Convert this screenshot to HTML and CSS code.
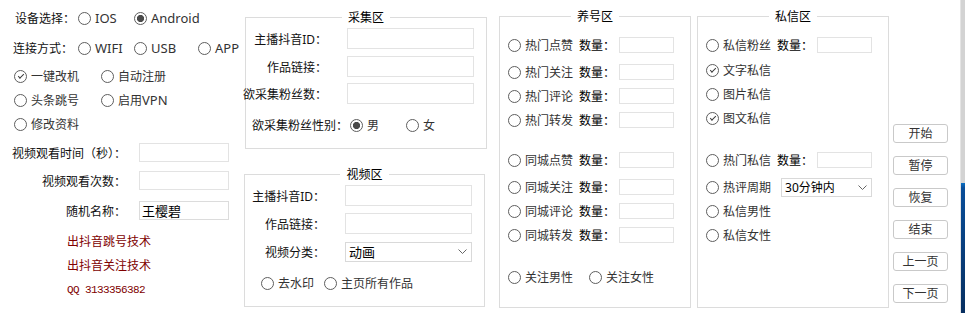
FILE: index.html
```html
<!DOCTYPE html>
<html lang="zh-CN">
<head>
  <meta charset="UTF-8" />
  <title>抖音助手</title>
  <link rel="stylesheet" href="styles.css">
</head>
<body>

  <div class="win">

    <!-- left: device + settings -->
    <div class="left">
      <div class="line line-top line-1">
        <span class="cap cap-device">设备选择：</span>
        <label class="opt w56"><span class="rb"></span><span class="en">IOS</span></label>
        <label class="opt"><span class="rb on"></span><span class="en">Android</span></label>
      </div>
      <div class="line line-top line-2">
        <span class="cap">连接方式：</span>
        <label class="opt w56"><span class="rb"></span><span class="en">WIFI</span></label>
        <label class="opt w64"><span class="rb"></span><span class="en">USB</span></label>
        <label class="opt"><span class="rb"></span><span class="en">APP</span></label>
      </div>
      <div class="line line-pick line-3">
        <label class="opt w87"><span class="rb chk"></span>一键改机</label>
        <label class="opt"><span class="rb"></span>自动注册</label>
      </div>
      <div class="line line-pick">
        <label class="opt w87"><span class="rb"></span>头条跳号</label>
        <label class="opt"><span class="rb"></span>启用<span class="en">VPN</span></label>
      </div>
      <div class="line line-pick">
        <label class="opt w87"><span class="rb"></span>修改资料</label>
      </div>

      <div class="field field-1">
        <span class="label">视频观看时间（秒）：</span>
        <input class="txt" type="text" />
      </div>
      <div class="field field-2">
        <span class="label">视频观看次数：</span>
        <input class="txt" type="text" />
      </div>
      <div class="field field-3">
        <span class="label">随机名称：</span>
        <input class="txt txt-name" type="text" value="王樱碧" />
      </div>

      <div class="promo promo-first">出抖音跳号技术</div>
      <div class="promo">出抖音关注技术</div>
      <div class="promo qq">QQ 3133356382</div>
    </div>

    <!-- middle: grab + video -->
    <div class="mid">
      <div class="group grab">
        <div class="group-title">采集区</div>
        <div class="field f1">
          <span class="label">主播抖音ID：</span>
          <input class="txt txt-lg" type="text" />
        </div>
        <div class="field f2">
          <span class="label">作品链接：</span>
          <input class="txt txt-lg" type="text" />
        </div>
        <div class="field f3">
          <span class="label">欲采集粉丝数：</span>
          <input class="txt txt-lg" type="text" />
        </div>
        <div class="gender">
          <span class="gender-cap">欲采集粉丝性别：</span>
          <label class="opt w56"><span class="rb on"></span>男</label>
          <label class="opt"><span class="rb"></span>女</label>
        </div>
      </div>

      <div class="group video">
        <div class="group-title">视频区</div>
        <div class="field f1">
          <span class="label">主播抖音ID：</span>
          <input class="txt txt-lg" type="text" />
        </div>
        <div class="field f2">
          <span class="label">作品链接：</span>
          <input class="txt txt-lg" type="text" />
        </div>
        <div class="field f2 field-pick">
          <span class="label">视频分类：</span>
          <div class="pick pick-lg">
            <span>动画</span>
            <svg class="chev" width="9" height="5" viewBox="0 0 9 5"><path d="M0.5 0.5L4.5 4.5L8.5 0.5" fill="none" stroke="#666" stroke-width="1"/></svg>
          </div>
        </div>
        <div class="video-opts">
          <label class="opt w63"><span class="rb"></span>去水印</label>
          <label class="opt"><span class="rb"></span>主页所有作品</label>
        </div>
      </div>
    </div>

    <!-- raise account -->
    <div class="group side raise">
      <div class="group-title">养号区</div>
      <div class="row r-first">
        <label class="opt"><span class="rb"></span>热门点赞</label>
        <span class="qty">数量：</span><input class="txt txt-sm" type="text" />
      </div>
      <div class="row r-second">
        <label class="opt"><span class="rb"></span>热门关注</label>
        <span class="qty">数量：</span><input class="txt txt-sm" type="text" />
      </div>
      <div class="row">
        <label class="opt"><span class="rb"></span>热门评论</label>
        <span class="qty">数量：</span><input class="txt txt-sm" type="text" />
      </div>
      <div class="row">
        <label class="opt"><span class="rb"></span>热门转发</label>
        <span class="qty">数量：</span><input class="txt txt-sm" type="text" />
      </div>
      <div class="row r-block">
        <label class="opt"><span class="rb"></span>同城点赞</label>
        <span class="qty">数量：</span><input class="txt txt-sm" type="text" />
      </div>
      <div class="row r-second">
        <label class="opt"><span class="rb"></span>同城关注</label>
        <span class="qty">数量：</span><input class="txt txt-sm" type="text" />
      </div>
      <div class="row">
        <label class="opt"><span class="rb"></span>同城评论</label>
        <span class="qty">数量：</span><input class="txt txt-sm" type="text" />
      </div>
      <div class="row">
        <label class="opt"><span class="rb"></span>同城转发</label>
        <span class="qty">数量：</span><input class="txt txt-sm" type="text" />
      </div>
      <div class="row r-follow">
        <label class="opt w81"><span class="rb"></span>关注男性</label>
        <label class="opt"><span class="rb"></span>关注女性</label>
      </div>
    </div>

    <!-- private messages -->
    <div class="group side msg">
      <div class="group-title">私信区</div>
      <div class="row r-first">
        <label class="opt"><span class="rb"></span>私信粉丝</label>
        <span class="qty">数量：</span><input class="txt txt-sm" type="text" />
      </div>
      <div class="row r-tight">
        <label class="opt"><span class="rb chk"></span>文字私信</label>
      </div>
      <div class="row">
        <label class="opt"><span class="rb"></span>图片私信</label>
      </div>
      <div class="row">
        <label class="opt"><span class="rb chk"></span>图文私信</label>
      </div>
      <div class="row r-block-msg">
        <label class="opt"><span class="rb"></span>热门私信</label>
        <span class="qty">数量：</span><input class="txt txt-sm" type="text" />
      </div>
      <div class="row r-second">
        <label class="opt"><span class="rb"></span>热评周期</label>
        <div class="pick pick-sm">
          <span>30分钟内</span>
          <svg class="chev" width="9" height="5" viewBox="0 0 9 5"><path d="M0.5 0.5L4.5 4.5L8.5 0.5" fill="none" stroke="#666" stroke-width="1"/></svg>
        </div>
      </div>
      <div class="row">
        <label class="opt"><span class="rb"></span>私信男性</label>
      </div>
      <div class="row">
        <label class="opt"><span class="rb"></span>私信女性</label>
      </div>
    </div>

    <!-- actions -->
    <div class="btns">
      <button class="btn" type="button">开始</button>
      <button class="btn" type="button">暂停</button>
      <button class="btn" type="button">恢复</button>
      <button class="btn" type="button">结束</button>
      <button class="btn" type="button">上一页</button>
      <button class="btn" type="button">下一页</button>
    </div>

    <div class="edge"></div>
  </div>

</body>
</html>
```

FILE: styles.css
```css
body {
  margin: 0;
  background: #fff;
  font-family: "Noto Sans", "Noto Sans CJK SC", sans-serif;
  font-size: 12px;
  color: #111;
}
.win {
  display: flex;
  width: 965px;
  height: 313px;
  overflow: hidden;
}

/* radio / check glyphs */
.rb {
  width: 13px;
  height: 13px;
  box-sizing: border-box;
  border: 1px solid #5e5e5e;
  border-radius: 50%;
  margin-right: 4px;
  background: #fff;
  flex: none;
  display: inline-flex;
  align-items: center;
  justify-content: center;
}
.rb.on {
  background: radial-gradient(circle, #4a4a4a 0 3.3px, #fff 3.9px);
}
.rb.chk::after {
  content: "";
  width: 5px;
  height: 2px;
  border-left: 1.6px solid #3a3a3a;
  border-bottom: 1.6px solid #3a3a3a;
  transform: translate(0, -1px) rotate(-45deg);
}
.opt {
  display: flex;
  align-items: center;
  flex: none;
  white-space: nowrap;
  color: #333;
}
.en {
  font-size: 13px;
}
.w56 { width: 56px; }
.w63 { width: 63px; }
.w64 { width: 64px; }
.w81 { width: 81px; }
.w87 { width: 87px; }

/* inputs */
.txt {
  box-sizing: border-box;
  height: 19px;
  width: 90px;
  margin: 0;
  padding: 0 2px;
  border: 1px solid #e3e3e3;
  background: #fff;
  font: inherit;
  color: #000;
  outline: none;
}
.txt-name {
  border-color: #dcdcdc;
  font-size: 13px;
}
.txt-lg {
  width: 127px;
  height: 21px;
}
.txt-sm {
  width: 55px;
  height: 16px;
  margin-left: 4px;
}
.pick {
  display: flex;
  align-items: center;
  justify-content: space-between;
  box-sizing: border-box;
  border: 1px solid #d9d9d9;
  background: #fff;
  padding: 0 4px 0 3px;
  color: #000;
  flex: none;
}
.pick-lg {
  width: 127px;
  height: 20px;
  font-size: 13px;
}
.pick-sm {
  width: 91px;
  height: 19px;
  margin-left: 10px;
}
.chev {
  display: block;
}

/* left column */
.left {
  width: 244px;
  flex: none;
}
.line {
  display: flex;
  align-items: center;
  height: 24px;
}
.line-top { padding-left: 13px; }
.line-pick { padding-left: 14px; }
.line-1 { margin-top: 6px; }
.line-2 { margin-top: 6px; }
.line-3 { margin-top: 4px; }
.cap {
  width: 65px;
  flex: none;
  white-space: nowrap;
  box-sizing: border-box;
}
.cap-device { padding-left: 2px; }

.field {
  display: flex;
  align-items: center;
  height: 19px;
}
.field .label {
  display: flex;
  justify-content: flex-end;
  flex: none;
  white-space: nowrap;
}
.left .field .label {
  width: 126px;
  margin-right: 13px;
}
.field-1 { margin-top: 7px; }
.field-2 { margin-top: 9px; }
.field-3 { margin-top: 11px; }

.promo {
  color: #800000;
  padding-left: 67px;
  height: 24px;
  line-height: 24px;
}
.promo-first { margin-top: 10px; }
.qq {
  font-family: "Liberation Mono", monospace;
  font-size: 11px;
  letter-spacing: -0.6px;
}

/* group boxes */
.group {
  border: 1px solid #dcdcdc;
  box-sizing: border-box;
  flex: none;
}
.group-title {
  width: fit-content;
  margin: -8px auto 0;
  padding: 0 6px;
  line-height: 15px;
  background: #fff;
  color: #000;
}

.mid {
  width: 244px;
  flex: none;
  padding-top: 17px;
  box-sizing: border-box;
}
.grab {
  width: 242px;
  margin-left: 1px;
  padding-bottom: 12px;
}
.video {
  width: 241px;
  margin-top: 25px;
  padding-bottom: 12px;
}
.mid .field { height: 21px; }
.mid .field .label { margin-right: 20px; }
.grab .field .label { width: 81px; }
.video .field .label { width: 80px; }
.mid .f1 { margin-top: 3px; }
.mid .f2 { margin-top: 7px; }
.mid .f3 { margin-top: 6px; }
.field-pick { height: 20px; }

.gender {
  display: flex;
  align-items: center;
  height: 22px;
  margin-top: 10px;
  padding-left: 6px;
}
.gender-cap {
  margin-right: 2px;
  white-space: nowrap;
}
.video-opts {
  display: flex;
  align-items: center;
  height: 22px;
  margin-top: 10px;
  padding-left: 16px;
}

/* raise + msg */
.side {
  width: 192px;
  height: 292px;
  margin-top: 16px;
}
.raise { margin-left: 11px; }
.msg { margin-left: 6px; }
.row {
  display: flex;
  align-items: center;
  height: 24px;
  padding-left: 8px;
}
.r-first { margin-top: 9px; }
.r-second { margin-top: 3px; }
.r-tight { margin-top: 1px; }
.r-block { margin-top: 16px; }
.r-block-msg { margin-top: 18px; }
.r-follow { margin-top: 18px; }
.qty {
  margin-left: 6px;
  white-space: nowrap;
  color: #000;
}

/* buttons */
.btns {
  width: 55px;
  flex: none;
  margin-left: 4px;
  padding-top: 124px;
  display: flex;
  flex-direction: column;
  gap: 13px;
}
.btn {
  height: 19px;
  box-sizing: border-box;
  border: 1px solid #c9c9c9;
  border-radius: 3px;
  background: #fff;
  padding: 0;
  font: inherit;
  line-height: 17px;
  color: #333;
}

.edge {
  width: 5px;
  flex: none;
  margin-left: 12px;
  border-left: 1px solid #e4e4e4;
  box-sizing: border-box;
  background: linear-gradient(#d3d3d3 0 183px, #0b70c4 183px, #0a4e99 60%, #072f60 100%);
}
```
